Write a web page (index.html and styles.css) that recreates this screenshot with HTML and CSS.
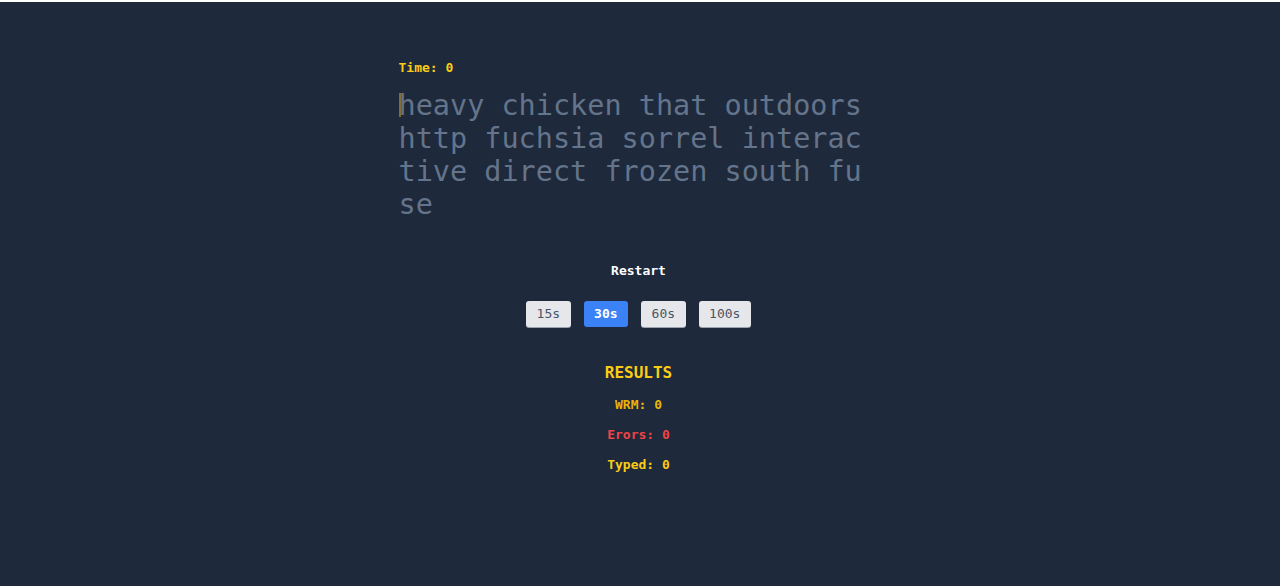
FILE: index.html
```html
<!DOCTYPE html>
<html lang="en">
<head>
<meta charset="utf-8">
<title>Typing Test</title>
<link rel="stylesheet" href="styles.css">
</head>
<body>
<main class="app">
  <section class="test">
    <div class="timer">Time: 0</div>
    <div class="words"><span class="current">h</span>eavy chicken that outdoors http fuchsia sorrel interactive direct frozen south fuse</div>
  </section>
  <button class="restart">Restart</button>
  <div class="durations">
    <button class="dur">15s</button>
    <button class="dur active">30s</button>
    <button class="dur">60s</button>
    <button class="dur">100s</button>
  </div>
  <section class="results">
    <h2 class="results-title">RESULTS</h2>
    <div class="stat wpm">WRM: 0</div>
    <div class="stat errors">Erors: 0</div>
    <div class="stat typed">Typed: 0</div>
  </section>
</main>
</body>
</html>
```
FILE: styles.css
```css
html { background: #ffffff; }
body {
  margin: 0;
  border-top: 2px solid #ffffff;
  background: #1e293b;
  min-height: calc(100vh - 2px);
  font-family: "DejaVu Sans Mono", "Liberation Mono", monospace;
}
.app {
  display: flex;
  flex-direction: column;
  align-items: center;
  padding-top: 57px;
  padding-right: 3px;
}
.test {
  width: 478px;
  margin-right: 2px;
}
.timer {
  font-size: 13px;
  line-height: 18px;
  font-weight: bold;
  color: #facc15;
}
.words {
  margin-top: 12px;
  font-size: 28.5px;
  line-height: 33px;
  color: #64748b;
  word-break: break-all;
}
.current {
  background: linear-gradient(rgba(234, 179, 8, 0.5), rgba(234, 179, 8, 0.5)) no-repeat 0 4px / 2px 24px;
}
.restart {
  margin-top: 41px;
  background: none;
  border: 0;
  padding: 0;
  font-family: inherit;
  font-size: 13px;
  line-height: 18px;
  font-weight: bold;
  color: #ffffff;
}
.durations {
  margin-top: 21px;
  display: flex;
  gap: 13px;
}
.dur {
  font-family: inherit;
  font-size: 13px;
  line-height: 18px;
  height: 26px;
  padding: 4px 10.5px;
  border: 0;
  border-radius: 3px;
  background: #e5e7eb;
  color: #4b5563;
  box-shadow: 0 1px 0 #9ca3af;
}
.dur.active {
  background: #3b82f6;
  color: #ffffff;
  font-weight: bold;
  box-shadow: none;
}
.results {
  margin-top: 35px;
  display: flex;
  flex-direction: column;
  align-items: center;
  gap: 12px;
}
.results-title {
  margin: 0;
  font-size: 16px;
  line-height: 22px;
  font-weight: bold;
  color: #facc15;
}
.stat {
  font-size: 13px;
  line-height: 18px;
  font-weight: bold;
}
.wpm { color: #eab308; }
.errors { color: #ef4444; }
.typed { color: #facc15; }
```
